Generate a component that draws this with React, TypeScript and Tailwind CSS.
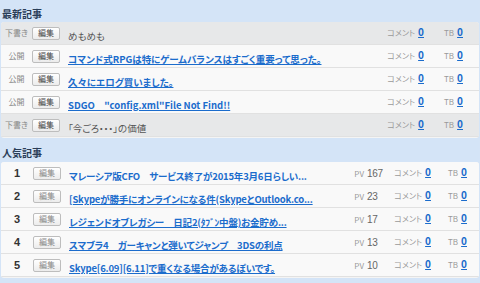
import React from 'react';

const recent = [
  { status: '下書き', draft: true, title: 'めもめも' },
  { status: '公開', draft: false, title: 'コマンド式RPGは特にゲームバランスはすごく重要って思った。' },
  { status: '公開', draft: false, title: '久々にエログ買いました。' },
  { status: '公開', draft: false, title: 'SDGO　"config.xml"File Not Find!!' },
  { status: '下書き', draft: true, title: '「今ごろ・・・」の価値' },
];

const popular = [
  { rank: 1, pv: 167, title: 'マレーシア版CFO　サービス終了が2015年3月6日らしい...', plain: true },
  { rank: 2, pv: 23, title: '[Skypeが勝手にオンラインになる件(SkypeとOutlook.co...' },
  { rank: 3, pv: 17, title: 'レジェンドオブレガシー　日記2(ﾀﾌﾞﾝ中盤)お金貯め...' },
  { rank: 4, pv: 13, title: 'スマブラ4　ガーキャンと弾いてジャンプ　3DSの利点' },
  { rank: 5, pv: 10, title: 'Skype[6.09][6.11]で重くなる場合があるぽいです。' },
];

const font = "font-['Noto_Sans_CJK_JP',sans-serif] [font-feature-settings:'palt']";

const EditButton = ({ light }: { light?: boolean }) => (
  <span
    className={`flex h-[13px] w-[28px] shrink-0 items-center justify-center rounded-[2px] border border-[#bdbdbd] bg-gradient-to-b from-white to-[#ececec] text-[8px] leading-none ${light ? 'text-[#888]' : 'text-[#444]'}`}
  >
    編集
  </span>
);

const Count = ({ label, width }: { label: string; width: string }) => (
  <div className={`flex shrink-0 items-baseline justify-end gap-[3px] ${width}`}>
    <span className="text-[8px] text-[#999]">{label}</span>
    <a className="text-[10px] font-bold leading-none text-[#1b6ccc] underline">0</a>
  </div>
);

const Heading = ({ children, pt }: { children: React.ReactNode; pt: string }) => (
  <h2 className={`${pt} pl-[2px] text-[10px] font-bold leading-[12px] text-[#2a3d57]`}>{children}</h2>
);

export default function App() {
  return (
    <div className={`h-[283px] w-[480px] overflow-hidden bg-[#d4e4f7] ${font}`}>
      <div className="h-[22px]">
        <Heading pt="pt-[8px]">最新記事</Heading>
      </div>
      <div className="mx-px overflow-hidden rounded-[3px] bg-[#f4f4f4] pb-px">
        {recent.map((r, i) => (
          <div
            key={i}
            className={`flex h-[23px] items-center border-b border-[#e1e1e1] pr-[16px] ${r.draft ? 'bg-[#e7e8e9]' : 'bg-[#f9f9f9]'}`}
          >
            <span className="w-[31px] shrink-0 text-center text-[8px] text-[#888]">{r.status}</span>
            <EditButton />
            <div className="min-w-0 flex-1 overflow-hidden whitespace-nowrap pl-[8px]">
              {r.draft ? (
                <span className="text-[9.5px] text-[#555]">{r.title}</span>
              ) : (
                <a className="text-[9.5px] font-bold text-[#1b6ccc] underline">{r.title}</a>
              )}
            </div>
            <Count label="コメント" width="w-[60px]" />
            <Count label="TB" width="w-[39px]" />
          </div>
        ))}
      </div>
      <div className="h-[24px]">
        <Heading pt="pt-[9px]">人気記事</Heading>
      </div>
      <div className="mx-px overflow-hidden rounded-[3px] bg-[#f4f4f4] pb-px">
        {popular.map((p) => (
          <div key={p.rank} className="flex h-[23px] items-center border-b border-[#e1e1e1] bg-[#f9f9f9] pr-[12px]">
            <span className="w-[32px] shrink-0 text-center font-['Liberation_Sans',sans-serif] text-[11px] font-bold text-[#333]">
              {p.rank}
            </span>
            <EditButton light />
            <div className="min-w-0 flex-1 overflow-hidden whitespace-nowrap pl-[8px]">
              <a className={`text-[9.5px] font-bold tracking-[-0.2px] text-[#1b6ccc] ${p.plain ? '' : 'underline'}`}>{p.title}</a>
            </div>
            <div className="flex w-[46px] shrink-0 items-baseline justify-end gap-[3px]">
              <span className="text-[8px] text-[#999]">PV</span>
              <span className="w-[14px] font-['Liberation_Sans',sans-serif] text-[10px] tracking-[-0.3px] text-[#666]">{p.pv}</span>
            </div>
            <Count label="コメント" width="w-[50px]" />
            <Count label="TB" width="w-[36px]" />
          </div>
        ))}
      </div>
    </div>
  );
}
